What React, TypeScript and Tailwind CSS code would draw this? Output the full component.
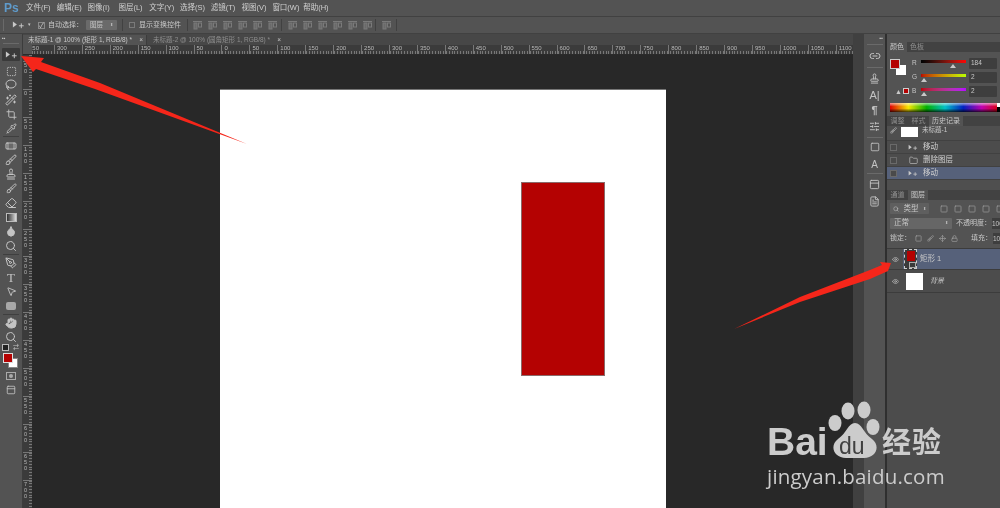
import {
  Bandage,
  Brush,
  Crop,
  Droplet,
  Eraser,
  Hand,
  Lasso,
  Link2,
  Lock,
  Move,
  MousePointer2,
  PenTool,
  Pipette,
  Search,
  Square,
  SquareDashed,
  Stamp,
  Wand2,
  Eye,
  Folder,
  SlidersHorizontal,
  PanelTop,
  FileText,
} from "lucide-react";
import type { ReactNode } from "react";

const cjk = "font-['Liberation_Sans','Noto_Sans_CJK_SC',sans-serif]";

const menus = ["文件(F)", "编辑(E)", "图像(I)", "图层(L)", "文字(Y)", "选择(S)", "滤镜(T)", "视图(V)", "窗口(W)", "帮助(H)"];
const hLabels = [350, 300, 250, 200, 150, 100, 50, 0, 50, 100, 150, 200, 250, 300, 350, 400, 450, 500, 550, 600, 650, 700, 750, 800, 850, 900, 950, 1000, 1050, 1100];
const vLabels = [50, 0, 50, 100, 150, 200, 250, 300, 350, 400, 450, 500, 550, 600, 650, 700];

const MoveGlyph = ({ className = "" }: { className?: string }) => (
  <svg viewBox="0 0 16 10" className={className} fill="none">
    <path d="M1 0.5 L1 8 L6 4.5 Z" fill="#c8c8c8" />
    <path d="M11.5 3 V9 M8.5 6 H14.5" stroke="#c8c8c8" strokeWidth="1.2" />
  </svg>
);

const AlignGlyph = () => (
  <svg viewBox="0 0 11 11" className="h-[11px] w-[11px]" fill="none" stroke="#7a7a7a">
    <path d="M1 1.5 H10" />
    <rect x="2" y="3" width="3" height="6" fill="#6a6a6a" />
    <rect x="6.5" y="3" width="3" height="4" />
  </svg>
);

const ToolSlot = ({ children, h = "h-[14.3px]" }: { children: ReactNode; h?: string }) => (
  <div className={`flex ${h} items-center justify-center text-[#c4c4c4]`}>{children}</div>
);

const ToolSep = () => <div className="mx-[3px] my-px h-px bg-[#3f3f3f]" />;

const DockSep = () => <div className="h-px w-[16px] bg-[#6a6a6a]" />;

const ColorRow = ({ label, value, track, knob }: { label: string; value: string; track: string; knob: string }) => (
  <div className="flex h-[14px] items-center">
    <span className="w-[6px] text-[6.5px] text-[#c4c4c4]">{label}</span>
    <div className="relative ml-[3px] -mt-[4px] w-[45px]">
      <div className={`h-[3px] ${track}`} />
      <div className={`absolute top-[4px] h-0 w-0 border-x-[3px] border-b-[4px] border-x-transparent border-b-[#c8c8c8] ${knob}`} />
    </div>
    <div className="ml-[3px] flex h-[11px] w-[28px] items-center rounded-[1px] bg-[#3e3e3e] pl-[2px] text-[6.5px] text-[#c8c8c8]">{value}</div>
  </div>
);

const HistoryRow = ({ text, active, folder }: { text: string; active?: boolean; folder?: boolean }) => (
  <div className={`flex h-[13px] shrink-0 items-center border-b border-[#414141] ${active ? "bg-[#56617a]" : ""}`}>
    <div className="ml-[3px] h-[7px] w-[7px] border border-[#6a6a6a] bg-[#4a4a4a]" />
    <div className="ml-[10px] flex w-[12px] justify-center">
      {folder ? <Folder size={9} color="#b4b4b4" /> : <MoveGlyph className="h-[7px] w-[10px]" />}
    </div>
    <span className={`ml-[4px] text-[7.5px] text-[#cfcfcf] ${cjk}`}>{text}</span>
  </div>
);

export default function App() {
  return (
    <div className={`relative flex h-[508px] w-[1000px] flex-col overflow-hidden bg-[#282828] blur-[0.35px] ${cjk}`}>
      {/* menu */}
      <div className="flex h-[16px] shrink-0 items-center bg-[#535353]">
        <span className="ml-[4px] w-[22px] text-[12px] font-bold text-[#5f9bcb]">Ps</span>
        <div className="flex">
          {menus.map((m) => (
            <span key={m} className="w-[30.8px] text-[7.5px] text-[#d0d0d0]">{m}</span>
          ))}
        </div>
      </div>

      {/* options bar */}
      <div className="flex h-[18px] shrink-0 items-center border-y border-[#414141] bg-[#535353] text-[#c8c8c8]">
        <div className="ml-[3px] h-[12px] w-px bg-[#6a6a6a]" />
        <MoveGlyph className="ml-[8px] h-[8px] w-[13px]" />
        <span className="ml-[3px] text-[5px]">▾</span>
        <div className="ml-[7px] flex h-[7px] w-[7px] items-center justify-center border border-[#8a8a8a] text-[7px] leading-none">✓</div>
        <span className="ml-[3px] text-[7px]">自动选择：</span>
        <div className="ml-[3px] flex h-[10px] w-[31px] items-center justify-between rounded-[1px] bg-[#6a6a6a] px-[4px] text-[6.5px]">
          图层<span className="text-[4px]">⬍</span>
        </div>
        <div className="ml-[5px] h-[12px] w-px bg-[#414141]" />
        <div className="ml-[6px] h-[6px] w-[6px] border border-[#7a7a7a]" />
        <span className="ml-[4px] text-[7px]">显示变换控件</span>
        <div className="ml-[6px] h-[12px] w-px bg-[#414141]" />
        <div className="ml-[4px] flex gap-[4px]">
          {[0, 1, 2, 3, 4, 5].map((i) => <AlignGlyph key={i} />)}
        </div>
        <div className="ml-[3px] h-[12px] w-px bg-[#414141]" />
        <div className="ml-[5px] flex gap-[4px]">
          {[0, 1, 2, 3, 4, 5].map((i) => <AlignGlyph key={i} />)}
        </div>
        <div className="ml-[2px] h-[12px] w-px bg-[#414141]" />
        <div className="ml-[5px]"><AlignGlyph /></div>
        <div className="ml-[4px] h-[12px] w-px bg-[#414141]" />
      </div>

      <div className="flex min-h-0 flex-1">
        {/* tools */}
        <div className="flex w-[23px] shrink-0 flex-col border-r border-[#3c3c3c] bg-[#535353] pt-px">
          <div className="flex h-[7px] items-center pl-[2px] text-[5px] leading-none text-[#c8c8c8]">▪▪</div>
          <div className="mx-[3px] mb-[4px] mt-px h-px bg-[#6a6a6a]" />
          <div className="mx-[2px] flex h-[13px] items-center justify-center rounded-[1px] bg-[#3a3a3a]">
            <MoveGlyph className="h-[8px] w-[13px]" />
          </div>
          <div className="mt-[3px]">
            <ToolSlot><SquareDashed size={11} /></ToolSlot>
            <ToolSlot><Lasso size={12} /></ToolSlot>
            <ToolSlot><Wand2 size={12} /></ToolSlot>
            <ToolSlot><Crop size={11} /></ToolSlot>
            <ToolSlot><Pipette size={11} /></ToolSlot>
            <ToolSep />
            <ToolSlot><Bandage size={12} /></ToolSlot>
            <ToolSlot><Brush size={12} /></ToolSlot>
            <ToolSlot><Stamp size={12} /></ToolSlot>
            <ToolSlot><Brush size={11} /></ToolSlot>
            <ToolSlot><Eraser size={12} /></ToolSlot>
            <ToolSlot><div className="h-[9px] w-[11px] border border-[#bbb] bg-gradient-to-r from-[#333] to-[#ddd]" /></ToolSlot>
            <ToolSlot><Droplet size={12} fill="#c4c4c4" /></ToolSlot>
            <ToolSlot><Search size={12} /></ToolSlot>
            <ToolSep />
            <ToolSlot><PenTool size={12} /></ToolSlot>
            <ToolSlot><span className="font-['Liberation_Serif',serif] text-[13px] leading-none">T</span></ToolSlot>
            <ToolSlot><MousePointer2 size={11} /></ToolSlot>
            <ToolSlot><div className="h-[8px] w-[10px] rounded-[2px] bg-[#a8a8a8]" /></ToolSlot>
            <ToolSep />
            <ToolSlot><Hand size={12} fill="#c4c4c4" /></ToolSlot>
            <ToolSlot><Search size={12} /></ToolSlot>
          </div>
          <div className="flex h-[6px] items-center justify-between px-[3px] text-[6px] text-[#c4c4c4]">
            <div className="h-[5px] w-[5px] bg-[#222] outline outline-1 outline-[#bbb]" /><span>⇄</span>
          </div>
          <div className="relative mx-[3px] mt-[2px] h-[16px]">
            <div className="absolute left-[5px] top-[5px] h-[10px] w-[10px] border border-[#888] bg-white" />
            <div className="absolute left-0 top-0 h-[10px] w-[10px] border border-[#ddd] bg-[#b40202]" />
          </div>
          <ToolSlot h="h-[14px]"><div className="flex h-[8px] w-[10px] items-center justify-center border border-[#aaa]"><div className="h-[4px] w-[4px] rounded-full bg-[#aaa]" /></div></ToolSlot>
          <ToolSlot h="h-[14px]"><PanelTop size={10} /></ToolSlot>
        </div>

        {/* document area */}
        <div className="flex w-[830px] min-w-0 shrink-0 flex-col">
          <div className="flex h-[11px] shrink-0 items-end bg-[#474747]">
            <div className="flex h-[10px] w-[123px] items-center justify-between bg-[#535353] pl-[5px] pr-[3px] text-[6.5px] text-[#c8c8c8]">
              <span className="whitespace-nowrap">未标题-1 @ 100% (矩形 1, RGB/8) *</span><span>×</span>
            </div>
            <div className="flex h-[10px] w-[139px] items-center justify-between border-l border-[#3c3c3c] pl-[6px] pr-[4px] text-[6.5px] text-[#8f8f8f]">
              <span className="whitespace-nowrap">未标题-2 @ 100% (圆角矩形 1, RGB/8) *</span><span className="text-[#c8c8c8]">×</span>
            </div>
          </div>
          <div className="flex h-[10px] shrink-0 overflow-hidden border-b border-[#2a2a2a] bg-[#3b3b3b]">
            <div className="z-10 h-full w-[9px] shrink-0 bg-[#535353]" />
            <div className="-ml-[6px] flex overflow-hidden bg-[repeating-linear-gradient(90deg,#777_0,#777_1px,transparent_1px,transparent_2.8px)] bg-[length:100%_3px] bg-bottom bg-no-repeat">
              {hLabels.map((l, i) => (
                <div key={i} className="h-full w-[27.93px] shrink-0 border-l border-[#777] pl-[2px] text-[6px] leading-[7px] text-[#b8b8b8]">{l}</div>
              ))}
            </div>
          </div>
          <div className="flex min-h-0 flex-1">
            <div className="flex w-[9px] shrink-0 flex-col overflow-hidden bg-[#3b3b3b] bg-[repeating-linear-gradient(180deg,#777_0,#777_1px,transparent_1px,transparent_2.8px)] bg-[length:3px_100%] bg-right bg-no-repeat pt-[6px]">
              {vLabels.map((l, i) => (
                <div key={i} className="flex h-[27.93px] shrink-0 flex-col border-t border-[#777] pl-px text-[5.5px] leading-[6px] text-[#b8b8b8]">
                  {String(l).split("").map((d, j) => <span key={j}>{d}</span>)}
                </div>
              ))}
            </div>
            <div className="relative min-w-0 flex-1 bg-[#282828] pl-[188px] pt-[34px]">
              <div className="relative h-[500px] w-[446px] border-t border-[#777] bg-white">
                <div className="absolute left-[301px] top-[92px] h-[194px] w-[84px] border border-[#8a6a6a] bg-[#b40202]" />
              </div>
            </div>
          </div>
        </div>

        {/* collapsed dock */}
        <div className="w-[11px] shrink-0 bg-[#404040]" />
        <div className="flex w-[23px] shrink-0 flex-col items-center border-r-2 border-[#2f2f2f] bg-[#535353] pt-[2px] text-[#c0c0c0]">
          <div className="h-[8px] w-full pr-[2px] text-right text-[5px] leading-none">▪▪</div>
          <DockSep />
          <ToolSlot h="h-[22px]"><Link2 size={12} /></ToolSlot>
          <DockSep />
          <ToolSlot h="h-[20px]"><Stamp size={11} /></ToolSlot>
          <ToolSlot h="h-[15px]"><span className="text-[11px] leading-none">A|</span></ToolSlot>
          <ToolSlot h="h-[15px]"><span className="text-[11px] font-bold leading-none">¶</span></ToolSlot>
          <ToolSlot h="h-[16px]"><SlidersHorizontal size={11} /></ToolSlot>
          <div className="h-[3px]" />
          <DockSep />
          <ToolSlot h="h-[18px]"><Square size={10} /></ToolSlot>
          <ToolSlot h="h-[17px]"><span className="text-[10px] leading-none">A</span></ToolSlot>
          <DockSep />
          <ToolSlot h="h-[20px]"><PanelTop size={11} /></ToolSlot>
          <ToolSlot h="h-[14px]"><FileText size={11} /></ToolSlot>
        </div>

        {/* panels */}
        <div className="flex min-w-0 flex-1 flex-col overflow-hidden bg-[#4c4c4c] text-[#c8c8c8]">
          <div className="flex h-[8px] shrink-0 bg-[#535353]" />
          <div className="flex h-[10px] shrink-0 items-end bg-[#424242] text-[7px]">
            <div className="flex h-full w-[20px] items-center justify-center bg-[#535353]">颜色</div>
            <div className="flex h-full w-[20px] items-center justify-center text-[#8f8f8f]">色板</div>
          </div>
          <div className="relative h-[64px] shrink-0 bg-[#535353] pl-[25px] pt-[4px]">
            <div className="absolute left-[9px] top-[13px] h-[10px] w-[10px] bg-white" />
            <div className="absolute left-[3px] top-[7px] h-[10px] w-[10px] border border-[#ccc] bg-[#b40202]" />
            <span className="absolute left-[8px] top-[36px] text-[7px] leading-none">▲</span>
            <div className="absolute left-[16px] top-[36px] h-[6px] w-[6px] border border-[#ccc] bg-[#b40202]" />
            <ColorRow label="R" value="184" track="bg-gradient-to-r from-[#020202] to-[#ff0202]" knob="left-[29px]" />
            <ColorRow label="G" value="2" track="bg-gradient-to-r from-[#b80202] to-[#b8ff02]" knob="left-0" />
            <ColorRow label="B" value="2" track="bg-gradient-to-r from-[#b80202] to-[#b802ff]" knob="left-0" />
            <div className="absolute bottom-[4px] left-[3px] h-[9px] w-[110px] bg-[linear-gradient(90deg,#e00000,#f8e800,#00b000,#00c0c8,#0020c0,#c000b0,#e00000)]">
              <div className="absolute inset-0 bg-[linear-gradient(rgba(255,255,255,0.6),transparent_40%,transparent_60%,rgba(0,0,0,0.75))]" />
              <div className="absolute inset-y-0 right-0 w-[3px] bg-[linear-gradient(#fff_50%,#000_50%)]" />
            </div>
          </div>
          <div className="flex h-[10px] shrink-0 items-end bg-[#424242] text-[7px] text-[#8f8f8f]">
            <div className="flex h-full w-[21px] items-center justify-center">调整</div>
            <div className="flex h-full w-[21px] items-center justify-center">样式</div>
            <div className="flex h-full w-[34px] items-center justify-center bg-[#535353] text-[#c8c8c8]">历史记录</div>
          </div>
          <div className="flex h-[15px] shrink-0 items-start border-b border-[#414141] bg-[#4f4f4f]">
            <Brush size={7} className="ml-[3px] mt-[1px]" />
            <div className="ml-[4px] mt-[1px] h-[10px] w-[17px] bg-white" />
            <span className="ml-[4px] text-[6.5px] leading-[7px]">未标题-1</span>
          </div>
          <HistoryRow text="移动" />
          <HistoryRow text="删除图层" folder />
          <HistoryRow text="移动" active />
          <div className="h-[10px] shrink-0 bg-[#4f4f4f]" />
          <div className="flex h-[10px] shrink-0 items-end bg-[#424242] text-[7px]">
            <div className="flex h-full w-[21px] items-center justify-center text-[#8f8f8f]">通道</div>
            <div className="flex h-full w-[20px] items-center justify-center bg-[#535353]">图层</div>
          </div>
          <div className="flex h-[48px] shrink-0 flex-col bg-[#535353] pl-[3px] text-[7.5px]">
            <div className="mt-[2px] flex h-[13px] items-center">
              <div className="flex h-[11px] w-[39px] shrink-0 items-center justify-between rounded-[1px] bg-[#5f5f5f] px-[3px]"><Search size={6} /><span>类型</span><span className="text-[4px]">⬍</span></div>
              <div className="ml-[11px] flex gap-[6px]">
                {[0, 1, 2, 3, 4].map((i) => <Square key={i} size={8} color="#a0a0a0" className="shrink-0" />)}
              </div>
            </div>
            <div className="mt-[2px] flex h-[12px] items-center">
              <div className="flex h-[11px] w-[62px] shrink-0 items-center justify-between rounded-[1px] bg-[#666] px-[4px]"><span>正常</span><span className="text-[4px]">⬍</span></div>
              <span className="ml-[4px] whitespace-nowrap text-[7px]">不透明度：</span>
              <div className="ml-px h-[11px] flex-1 bg-[#3e3e3e] text-[6.5px] leading-[11px]">100%</div>
            </div>
            <div className="mt-[3px] flex h-[12px] items-center">
              <span className="whitespace-nowrap text-[7px]">锁定：</span>
              <div className="ml-[4px] flex shrink-0 items-center gap-[5px] text-[#a8a8a8]">
                <Square size={7} /><Brush size={7} /><Move size={7} /><Lock size={7} />
              </div>
              <span className="ml-[13px] whitespace-nowrap text-[7px]">填充：</span>
              <div className="ml-px h-[11px] flex-1 bg-[#3e3e3e] text-[6.5px] leading-[11px]">100%</div>
            </div>
          </div>
          <div className="flex h-[22px] shrink-0 items-center border-y border-[#3c3c3c] bg-[#56617a]">
            <div className="flex h-full w-[16px] items-center justify-center bg-[#4f4f4f]"><Eye size={7} /></div>
            <div className="relative ml-[1px] h-[20px] w-[13px] border border-dashed border-[#ccc] bg-[#3a3a3a]">
              <div className="mx-auto mt-px h-[10px] w-[8px] bg-[#b40202]" />
              <div className="absolute bottom-0 right-0 h-[6px] w-[7px] border border-[#aaa]" />
            </div>
            <span className="ml-[3px] text-[7.5px]">矩形 1</span>
          </div>
          <div className="flex h-[23px] shrink-0 items-center border-b border-[#3c3c3c]">
            <div className="flex h-full w-[16px] items-center justify-center"><Eye size={7} /></div>
            <div className="ml-[3px] h-[17px] w-[17px] bg-white" />
            <span className="ml-[7px] text-[7px] italic">背景</span>
          </div>
        </div>
      </div>

      {/* annotation arrows */}
      <svg className="absolute inset-0 h-full w-full" viewBox="0 0 1000 508">
        <path d="M21 56 L44 58 L41 62 L100 83 L247 144 L95 89 L36 69 L33 72 Z" fill="#f5261a" />
        <path d="M891 263 L888 271 L870 279 L800 302 L734 329 L800 297 L870 270 L882 265 L880 262 Z" fill="#f5261a" />
      </svg>

      {/* watermark */}
      <div className="absolute left-[767px] top-[400px] w-[190px] text-[#cccccc]">
        <div className="relative h-[62px]">
          <span className="absolute left-0 top-[22px] font-['Liberation_Sans',sans-serif] text-[39px] font-bold leading-none">Bai</span>
          <svg viewBox="0 0 52 60" className="absolute left-[61px] top-0 h-[60px] w-[52px]" fill="#cccccc">
            <ellipse cx="7" cy="23" rx="6.5" ry="8" />
            <ellipse cx="20" cy="11" rx="6.5" ry="8.5" />
            <ellipse cx="36" cy="10" rx="6.5" ry="8.5" />
            <ellipse cx="45" cy="27" rx="6.5" ry="8" />
            <path d="M27 23 C20 23 19 33 10 39 C1 46 6 58 18 58 C24 58 30 58 36 58 C48 58 53 46 44 39 C35 33 34 23 27 23 Z" />
          </svg>
          <span className="absolute left-[72px] top-[35px] font-['Liberation_Sans',sans-serif] text-[23px] leading-none text-[#404040]">du</span>
          <span className="absolute left-[115px] top-[26px] font-['Noto_Sans_CJK_SC',sans-serif] text-[29px] font-bold leading-none tracking-[1px]">经验</span>
        </div>
        <div className="mt-[4px] whitespace-nowrap font-['Open_Sans',sans-serif] text-[20.5px] leading-none tracking-[0.2px]">jingyan.baidu.com</div>
      </div>
    </div>
  );
}
